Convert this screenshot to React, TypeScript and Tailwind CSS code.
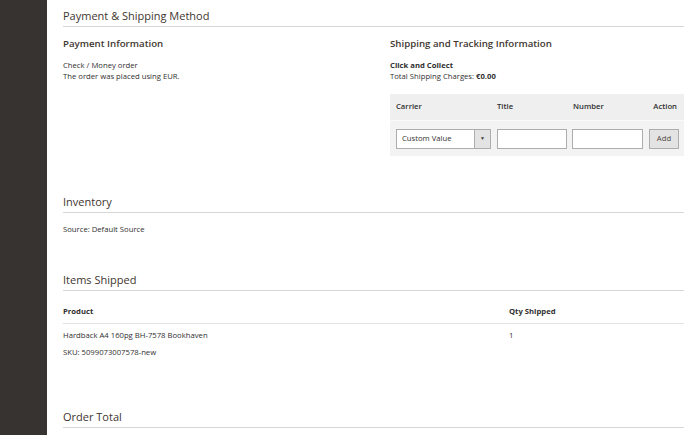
import React from 'react';

const SectionTitle: React.FC<{ children: React.ReactNode }> = ({ children }) => (
  <div className="border-b border-[#d6d6d6] pb-[2px]">
    <h2 className="text-[11px] leading-[16px] font-normal text-[#41362f]">{children}</h2>
  </div>
);

export default function App() {
  return (
    <div className="flex w-[700px] h-[435px] overflow-hidden bg-white text-[#303030]" style={{ fontFamily: '"Open Sans", "Noto Sans", sans-serif' }}>
      <aside className="w-[47px] shrink-0 bg-[#373330]" />
      <main className="flex-1 pl-[16px] pr-[16px] pt-[8px]">
        {/* Payment & Shipping */}
        <section>
          <SectionTitle>Payment &amp; Shipping Method</SectionTitle>
          <div className="grid grid-cols-[310px_1fr] gap-x-[17px] mt-[10px]">
            <div>
              <h3 className="text-[9.7px] leading-[14px] font-semibold text-[#41362f]">Payment Information</h3>
              <div className="mt-[9px] text-[7.7px] leading-[11px]">
                <div>Check / Money order</div>
                <div>The order was placed using EUR.</div>
              </div>
            </div>
            <div>
              <h3 className="text-[9.7px] leading-[14px] font-semibold text-[#41362f]">Shipping and Tracking Information</h3>
              <div className="mt-[9px] text-[7.7px] leading-[11px]">
                <div className="font-bold">Click and Collect</div>
                <div>Total Shipping Charges: <span className="font-bold">€0.00</span></div>
              </div>
              <div className="mt-[12px] bg-[#f3f3f3] text-[7.7px]">
                <div className="grid grid-cols-[101px_76px_76px_1fr] h-[27px] items-center bg-[#efefef] border-b border-[#fafafa] pl-[6px] pr-[6px] font-semibold">
                  <div>Carrier</div>
                  <div>Title</div>
                  <div>Number</div>
                  <div className="text-right pr-[1px]">Action</div>
                </div>
                <div className="flex items-center h-[35px] pl-[6px]">
                  <div className="flex w-[95px] h-[20px] border border-[#adadad] bg-white">
                    <div className="flex-1 flex items-center pl-[5px]">Custom Value</div>
                    <div className="w-[16px] flex items-center justify-center bg-[#e3e3e3] border-l border-[#adadad] text-[5px] text-[#41362f]">▼</div>
                  </div>
                  <div className="ml-[6px] w-[70px] h-[20px] border border-[#adadad] bg-white" />
                  <div className="ml-[5px] w-[71px] h-[20px] border border-[#adadad] bg-white" />
                  <button className="ml-[6px] w-[30px] h-[20px] border border-[#adadad] bg-[#e3e3e3] text-[7.7px] text-[#514943]">Add</button>
                </div>
              </div>
            </div>
          </div>
        </section>

        {/* Inventory */}
        <section className="mt-[38px]">
          <SectionTitle>Inventory</SectionTitle>
          <div className="mt-[11px] text-[7.7px] leading-[11px]">Source: Default Source</div>
        </section>

        {/* Items Shipped */}
        <section className="mt-[37px]">
          <SectionTitle>Items Shipped</SectionTitle>
          <div className="mt-[15px] text-[7.7px]">
            <div className="grid grid-cols-[446px_1fr] h-[18px] items-start font-bold border-b border-[#e3e3e3] leading-[11px]">
              <div>Product</div>
              <div>Qty Shipped</div>
            </div>
            <div className="grid grid-cols-[446px_1fr] pt-[6px] leading-[11px]">
              <div>
                <div>Hardback A4 160pg BH-7578 Bookhaven</div>
                <div className="mt-[6px]">SKU: 5099073007578-new</div>
              </div>
              <div>1</div>
            </div>
          </div>
        </section>

        {/* Order Total */}
        <section className="mt-[51px]">
          <SectionTitle>Order Total</SectionTitle>
        </section>
      </main>
    </div>
  );
}
